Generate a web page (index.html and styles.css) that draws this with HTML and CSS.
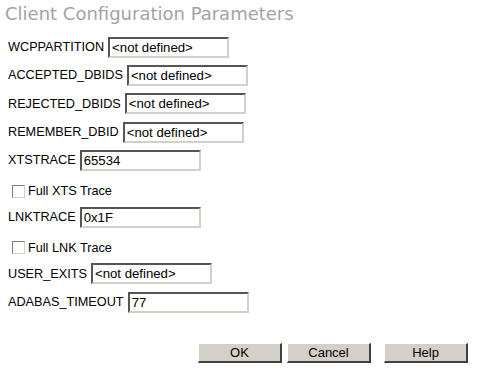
FILE: index.html
```html
<!DOCTYPE HTML>
<html>
	<head>
		<meta charset="utf-8">
		<title>Client Configuration Parameters</title>
		<link rel="stylesheet" href="styles.css">
	</head>
	<body>
		<h1 class="title">Client Configuration Parameters</h1>
		<form class="params">
			<div class="row"><label>WCPPARTITION</label><input class="field" type="text" value="<not defined>"></div>
			<div class="row"><label>ACCEPTED_DBIDS</label><input class="field" type="text" value="<not defined>"></div>
			<div class="row"><label>REJECTED_DBIDS</label><input class="field" type="text" value="<not defined>"></div>
			<div class="row"><label>REMEMBER_DBID</label><input class="field" type="text" value="<not defined>"></div>
			<div class="row"><label>XTSTRACE</label><input class="field" type="text" value="65534"></div>
			<div class="row check"><input class="box" type="checkbox"><label>Full XTS Trace</label></div>
			<div class="row"><label>LNKTRACE</label><input class="field" type="text" value="0x1F"></div>
			<div class="row check"><input class="box" type="checkbox"><label>Full LNK Trace</label></div>
			<div class="row"><label>USER_EXITS</label><input class="field" type="text" value="<not defined>"></div>
			<div class="row"><label>ADABAS_TIMEOUT</label><input class="field" type="text" value="77"></div>
			<div class="buttons">
				<button type="button" class="btn">OK</button>
				<button type="button" class="btn">Cancel</button>
				<button type="button" class="btn help">Help</button>
			</div>
		</form>
	</body>
</html>
```

FILE: styles.css
```css
*{
	margin:0;
	padding:0;
	box-sizing:border-box;
}
body{
	background:#fff;
	font-family:"Liberation Sans", Arial, sans-serif;
	font-size:12.7px;
	color:#000;
	padding:3px 0 0 5px;
}
.title{
	font-family:"DejaVu Sans", Verdana, sans-serif;
	font-weight:normal;
	font-size:18px;
	color:#a3a3a3;
	line-height:22px;
	height:30px;
}
.params{
	padding-left:3px;
}
.row{
	display:flex;
	align-items:center;
	height:28.33px;
}
.row label{
	margin-right:4px;
}
.field{
	width:121px;
	height:21px;
	font-family:"Liberation Sans", Arial, sans-serif;
	font-size:13.2px;
	padding:0 2px;
	color:#000;
	border-style:solid;
	border-width:2px;
	border-color:#555 #d4d0c8 #d4d0c8 #555;
	outline:none;
	background:#fff;
}
/*复选框*/
.check{
	padding:5px 0 0 4px;
}
.box{
	-webkit-appearance:none;
	appearance:none;
	width:13px;
	height:13px;
	border:1px solid;
	border-color:#808080 #d4d0c8 #d4d0c8 #808080;
	background:#fff;
	margin-right:3px;
}
.buttons{
	display:flex;
	padding:27px 0 0 190px;
}
.btn{
	width:84px;
	height:20px;
	background:#d4d0c8;
	font-family:"Liberation Sans", Arial, sans-serif;
	font-size:13px;
	color:#000;
	border-style:solid;
	border-width:1px 2px 2px 1px;
	border-color:#fff #404040 #404040 #fff;
	margin-right:5px;
}
.btn.help{
	margin-left:8px;
}
```
